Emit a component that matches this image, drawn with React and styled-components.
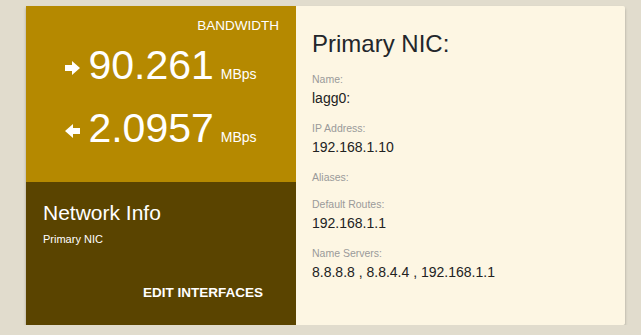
import React from "react";
import styled, { createGlobalStyle } from "styled-components";

const Global = createGlobalStyle`
  html, body { margin: 0; padding: 0; background: #e1dccd; }
  body { font-family: "Liberation Sans", Arial, sans-serif; }
`;

const Page = styled.div`
  padding: 6px 0 0 26px;
`;

const Card = styled.div`
  display: grid;
  grid-template-columns: 270px 329px;
  height: 319px;
  width: 599px;
  border-radius: 0 2px 2px 0;
  box-shadow: 0 2px 3px rgba(0, 0, 0, 0.28);
`;

const LeftCol = styled.div`
  display: grid;
  grid-template-rows: 176px 1fr;
  color: #fff;
`;

const Bandwidth = styled.section`
  background: #b58900;
  padding: 12px 17px 0;
`;

const Caption = styled.div`
  text-align: right;
  font-size: 13.5px;
  line-height: 16px;
  margin-bottom: 7px;
`;

const RateRow = styled.div`
  text-align: center;
  white-space: nowrap;
  line-height: 48px;
  height: 48px;
  margin-bottom: ${(p) => (p.$gap ? "15px" : "0")};
`;

const Arrow = styled.svg`
  width: 15px;
  height: 14px;
  vertical-align: 4px;
  margin-right: 8px;
  fill: #fff;
`;

const Value = styled.span`
  font-size: 41px;
`;

const Unit = styled.span`
  font-size: 14px;
  margin-left: 7px;
`;

const Info = styled.section`
  background: #5a4400;
  padding: 19px 17px 24px;
  display: flex;
  flex-direction: column;
`;

const InfoTitle = styled.div`
  font-size: 21px;
  line-height: 24px;
`;

const InfoSub = styled.div`
  font-size: 11px;
  line-height: 14px;
  margin-top: 7px;
`;

const Actions = styled.div`
  margin-top: auto;
  display: flex;
  justify-content: flex-end;
`;

const ActionButton = styled.button`
  background: none;
  border: 0;
  color: #fff;
  font-family: inherit;
  font-weight: bold;
  font-size: 13.5px;
  line-height: 16px;
  padding: 0 16px;
  cursor: pointer;
`;

const Details = styled.section`
  background: #fdf6e3;
  border-radius: 0 2px 2px 0;
  padding: 24px 16px;
  color: #222;
`;

const Title = styled.h2`
  margin: 0 0 14px;
  font-size: 24px;
  line-height: 28px;
  font-weight: normal;
  color: #23262b;
`;

const Field = styled.div`
  margin-bottom: 13px;
`;

const Label = styled.div`
  font-size: 10.5px;
  line-height: 14px;
  color: #9a9a9a;
  margin-bottom: 2px;
`;

const FieldValue = styled.div`
  font-size: 14px;
  line-height: 20px;
  color: #222;
`;

const RightArrow = () => (
  <Arrow viewBox="0 0 15 14">
    <polygon points="0,4 7,4 7,0 15,7 7,14 7,10 0,10" />
  </Arrow>
);

const LeftArrow = () => (
  <Arrow viewBox="0 0 15 14">
    <polygon points="15,4 8,4 8,0 0,7 8,14 8,10 15,10" />
  </Arrow>
);

const fields = [
  ["Name:", "lagg0:"],
  ["IP Address:", "192.168.1.10"],
  ["Aliases:", ""],
  ["Default Routes:", "192.168.1.1"],
  ["Name Servers:", "8.8.8.8 , 8.8.4.4 , 192.168.1.1"],
];

export default function App() {
  return (
    <Page>
      <Global />
      <Card>
        <LeftCol>
          <Bandwidth>
            <Caption>BANDWIDTH</Caption>
            <RateRow $gap>
              <RightArrow />
              <Value>90.261</Value>
              <Unit>MBps</Unit>
            </RateRow>
            <RateRow>
              <LeftArrow />
              <Value>2.0957</Value>
              <Unit>MBps</Unit>
            </RateRow>
          </Bandwidth>
          <Info>
            <InfoTitle>Network Info</InfoTitle>
            <InfoSub>Primary NIC</InfoSub>
            <Actions>
              <ActionButton>EDIT INTERFACES</ActionButton>
            </Actions>
          </Info>
        </LeftCol>
        <Details>
          <Title>Primary NIC:</Title>
          {fields.map(([label, value]) => (
            <Field key={label}>
              <Label>{label}</Label>
              {value && <FieldValue>{value}</FieldValue>}
            </Field>
          ))}
        </Details>
      </Card>
    </Page>
  );
}
